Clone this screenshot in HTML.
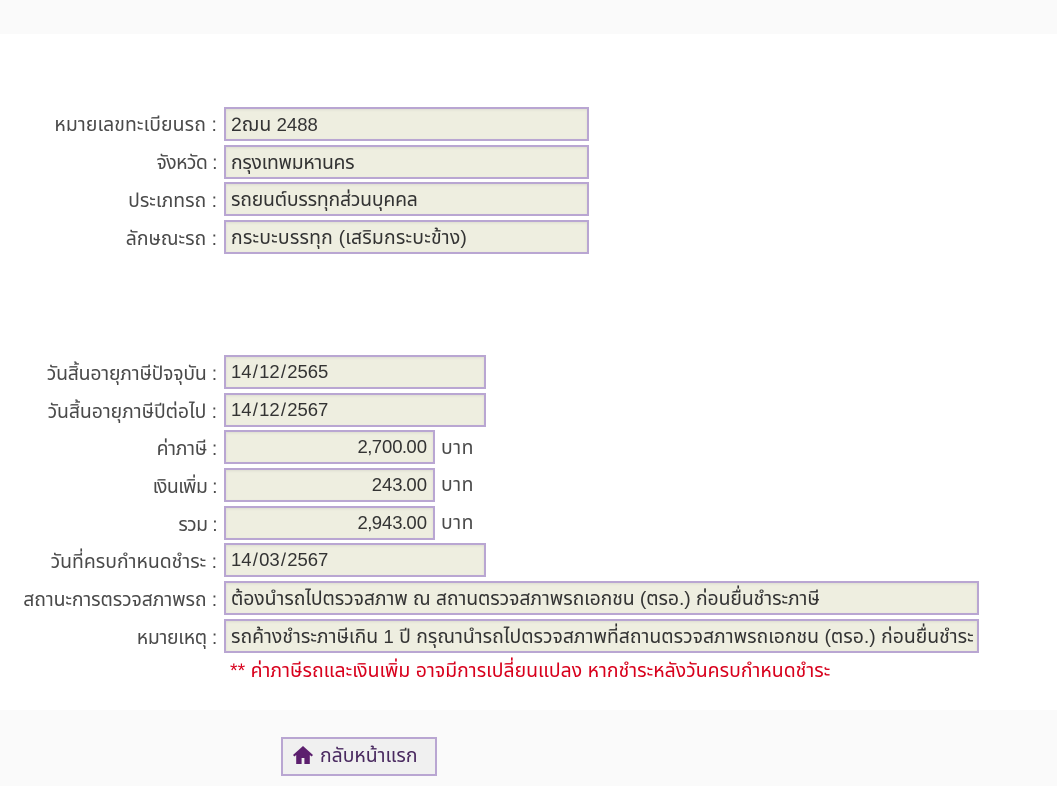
<!DOCTYPE html>
<html lang="th"><head><meta charset="utf-8"><title>ตรวจสอบ</title>
<style>
html,body{margin:0;padding:0;background:#fff}
body{position:relative;width:1057px;height:786px;overflow:hidden;font-family:"Liberation Sans","Noto Sans Thai","Noto Sans CJK SC",sans-serif;font-size:19.4px;color:#333}
.n{font-size:18.5px}
.n i{font-style:normal;margin:0 -.65px}
.d{font-size:18.5px}
.d i{font-style:normal;padding:0 1.2px}
.band{position:absolute;left:0;width:1057px;background:#fafafa}
.l{position:absolute;right:840px;white-space:nowrap;text-align:right;color:#4a4a4a;line-height:24px}
.f{position:absolute;left:224px;box-sizing:border-box;height:34px;border:2px solid #b9a6d2;background:#eeeee0;padding-left:5px;line-height:32px;white-space:nowrap;overflow:hidden;color:#333;box-shadow:inset 0 1px 2px #dcdcd0}
.g{line-height:29px}
.r{text-align:right;padding:0 6px 0 0}
.u{position:absolute;left:441px;color:#4a4a4a;line-height:24px;letter-spacing:.5px}
.w{position:absolute;left:230px;top:659px;color:#d8001c;line-height:24px;white-space:nowrap;letter-spacing:.03px}
.b{position:absolute;left:281px;top:737px;width:156px;height:39px;box-sizing:border-box;border:2px solid #b9a6d2;background:#f0f0f0;color:#4a2a60}
.b svg{position:absolute;left:10px;top:7px}
.b span{position:absolute;left:37px;top:5px;line-height:24px;white-space:nowrap}
</style></head><body>
<div class="band" style="top:0;height:34px"></div>
<div class="band" style="top:710px;height:76px"></div>

<div class="l" style="top:113px;letter-spacing:.11px">หมายเลขทะเบียนรถ :</div><div class="f" style="top:107px;width:365px">2ฌน <span class="n">2488</span></div>
<div class="l" style="top:151px;letter-spacing:-.55px">จังหวัด :</div><div class="f" style="top:145px;width:365px;letter-spacing:-.3px">กรุงเทพมหานคร</div>
<div class="l" style="top:189px">ประเภทรถ :</div><div class="f" style="top:182px;width:365px;letter-spacing:-.2px">รถยนต์บรรทุกส่วนบุคคล</div>
<div class="l" style="top:227px">ลักษณะรถ :</div><div class="f" style="top:220px;width:365px;letter-spacing:.2px">กระบะบรรทุก (เสริมกระบะข้าง)</div>

<div class="l" style="top:362px;letter-spacing:-.2px">วันสิ้นอายุภาษีปัจจุบัน :</div><div class="f g" style="top:355px;width:262px"><span class="d">14<i>/</i>12<i>/</i>2565</span></div>
<div class="l" style="top:400px;letter-spacing:-.05px">วันสิ้นอายุภาษีปีต่อไป :</div><div class="f g" style="top:393px;width:262px"><span class="d">14<i>/</i>12<i>/</i>2567</span></div>
<div class="l" style="top:437px;letter-spacing:-.3px">ค่าภาษี :</div><div class="f g r" style="top:430px;width:211px"><span class="n">2<i>,</i>700<i>.</i>00</span></div><div class="u" style="top:436px">บาท</div>
<div class="l" style="top:475px;letter-spacing:-.55px">เงินเพิ่ม :</div><div class="f g r" style="top:468px;width:211px"><span class="n">243<i>.</i>00</span></div><div class="u" style="top:473px">บาท</div>
<div class="l" style="top:513px;letter-spacing:-.6px">รวม :</div><div class="f g r" style="top:506px;width:211px"><span class="n">2<i>,</i>943<i>.</i>00</span></div><div class="u" style="top:511px">บาท</div>
<div class="l" style="top:550px">วันที่ครบกำหนดชำระ :</div><div class="f g" style="top:543px;width:262px"><span class="d">14<i>/</i>03<i>/</i>2567</span></div>
<div class="l" style="top:588px;letter-spacing:-.1px">สถานะการตรวจสภาพรถ :</div><div class="f" style="top:581px;width:755px;letter-spacing:-.08px">ต้องนำรถไปตรวจสภาพ ณ สถานตรวจสภาพรถเอกชน (ตรอ.) ก่อนยื่นชำระภาษี</div>
<div class="l" style="top:626px;letter-spacing:-.3px">หมายเหตุ :</div><div class="f" style="top:619px;width:755px">รถค้างชำระภาษีเกิน <span class="n">1</span> ปี กรุณานำรถไปตรวจสภาพที่สถานตรวจสภาพรถเอกชน (ตรอ.) ก่อนยื่นชำระ</div>
<div class="w">** ค่าภาษีรถและเงินเพิ่ม อาจมีการเปลี่ยนแปลง หากชำระหลังวันครบกำหนดชำระ</div>

<div class="b"><svg width="20" height="18" viewBox="0 0 20 18"><path fill="#5c1f6e" fill-rule="evenodd" d="M10 0 L20 9 L18.6 10.5 L16.8 9 V18 H3.2 V9 L1.4 10.5 L0 9 Z M8.6 12 V18 H11.4 V12 Z"/></svg><span>กลับหน้าแรก</span></div>
</body></html>
